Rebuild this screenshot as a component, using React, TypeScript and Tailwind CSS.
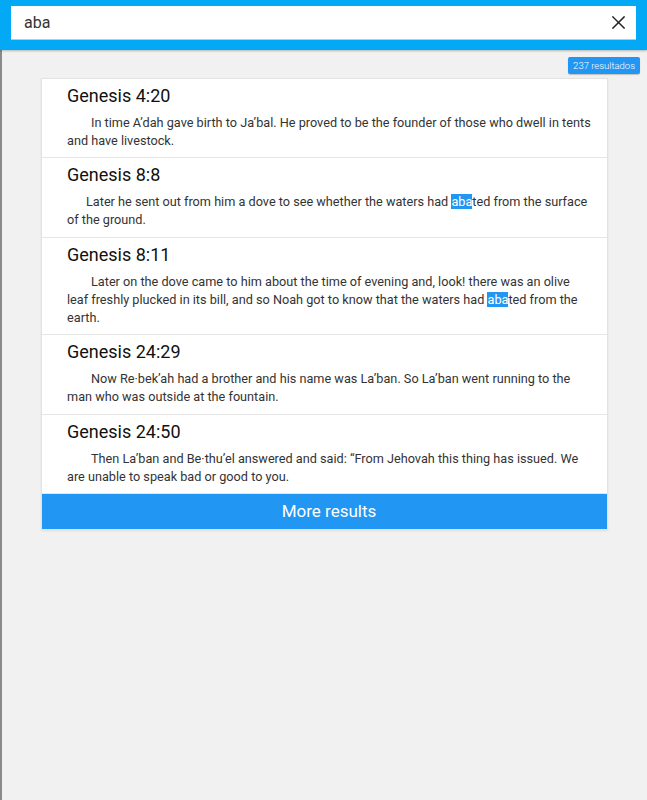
import React from "react";

type Part = string | { hl: string } | { br: true };

const results: { ref: string; indent: string; parts: Part[] }[] = [
  {
    ref: "Genesis 4:20",
    indent: "indent-[24px]",
    parts: [
      "In time A\u2019dah gave birth to Ja\u2019bal. He proved to be the founder of those who dwell in tents and have livestock.",
    ],
  },
  {
    ref: "Genesis 8:8",
    indent: "indent-[19px]",
    parts: [
      "Later he sent out from him a dove to see whether the waters had ",
      { hl: "aba" },
      "ted from the surface of the ground.",
    ],
  },
  {
    ref: "Genesis 8:11",
    indent: "indent-[24px]",
    parts: [
      "Later on the dove came to him about the time of evening and, look! there was an olive",
      { br: true },
      "leaf freshly plucked in its bill, and so Noah got to know that the waters had ",
      { hl: "aba" },
      "ted from the earth.",
    ],
  },
  {
    ref: "Genesis 24:29",
    indent: "indent-[24px]",
    parts: [
      "Now Re\u00b7bek\u2019ah had a brother and his name was La\u2019ban. So La\u2019ban went running to the man who was outside at the fountain.",
    ],
  },
  {
    ref: "Genesis 24:50",
    indent: "indent-[24px]",
    parts: [
      "Then La\u2019ban and Be\u00b7thu\u2019el answered and said: \u201cFrom Jehovah this thing has issued. We are unable to speak bad or good to you.",
    ],
  },
];

export default function App() {
  return (
    <div
      className="min-h-[800px] bg-[#f1f1f1] flex flex-col"
      style={{ fontFamily: "Roboto, 'Noto Sans', sans-serif" }}
    >
      <header className="h-[50px] bg-[#03a9f4] px-[11px] pt-[6px] shadow-[0_1px_2px_rgba(0,0,0,0.25)] relative z-10">
        <div className="h-[34px] bg-white flex items-center pl-[13px] pr-[10px] border-b border-[#9ed6e6]">
          <span className="flex-1 text-[16px] text-[#333]">aba</span>
          <svg width="13" height="13" viewBox="0 0 14 14" className="mr-[1px]">
            <path d="M1 1 L13 13 M13 1 L1 13" stroke="#222" strokeWidth="1.6" strokeLinecap="square" />
          </svg>
        </div>
      </header>
      <main className="flex-1 border-l-[2px] border-[#8a8a8a] pb-4">
        <div className="flex justify-end pr-[7px] pt-[7px]">
          <span className="bg-[#2196f3] text-white text-[9.5px] font-light leading-[17px] px-[5px] rounded-[2px] shadow-[0_1px_1px_rgba(0,0,0,0.2)]">
            237 resultados
          </span>
        </div>
        <div className="ml-[39px] mr-[39px] mt-[4px] bg-white border border-[#e3e3e3] shadow-[0_1px_2px_rgba(0,0,0,0.08)]">
          {results.map((r) => (
            <div key={r.ref} className="border-b border-[#e6e6e6] pl-[25px] pr-[14px] pt-[5px] pb-[7.4px]">
              <div className="text-[18px] leading-[24px] text-[#111]">{r.ref}</div>
              <p className={`mt-[6px] text-[12.7px] leading-[18px] text-[#333] ${r.indent}`}>
                {r.parts.map((p, i) =>
                  typeof p === "string" ? (
                    <span key={i}>{p}</span>
                  ) : "br" in p ? (
                    <br key={i} />
                  ) : (
                    <span key={i} className="bg-[#2196f3] text-white">
                      {p.hl}
                    </span>
                  )
                )}
              </p>
            </div>
          ))}
          <button className="w-full h-[35px] bg-[#2196f3] text-white text-[17px] pl-[9px] flex items-center justify-center">
            More results
          </button>
        </div>
      </main>
    </div>
  );
}
